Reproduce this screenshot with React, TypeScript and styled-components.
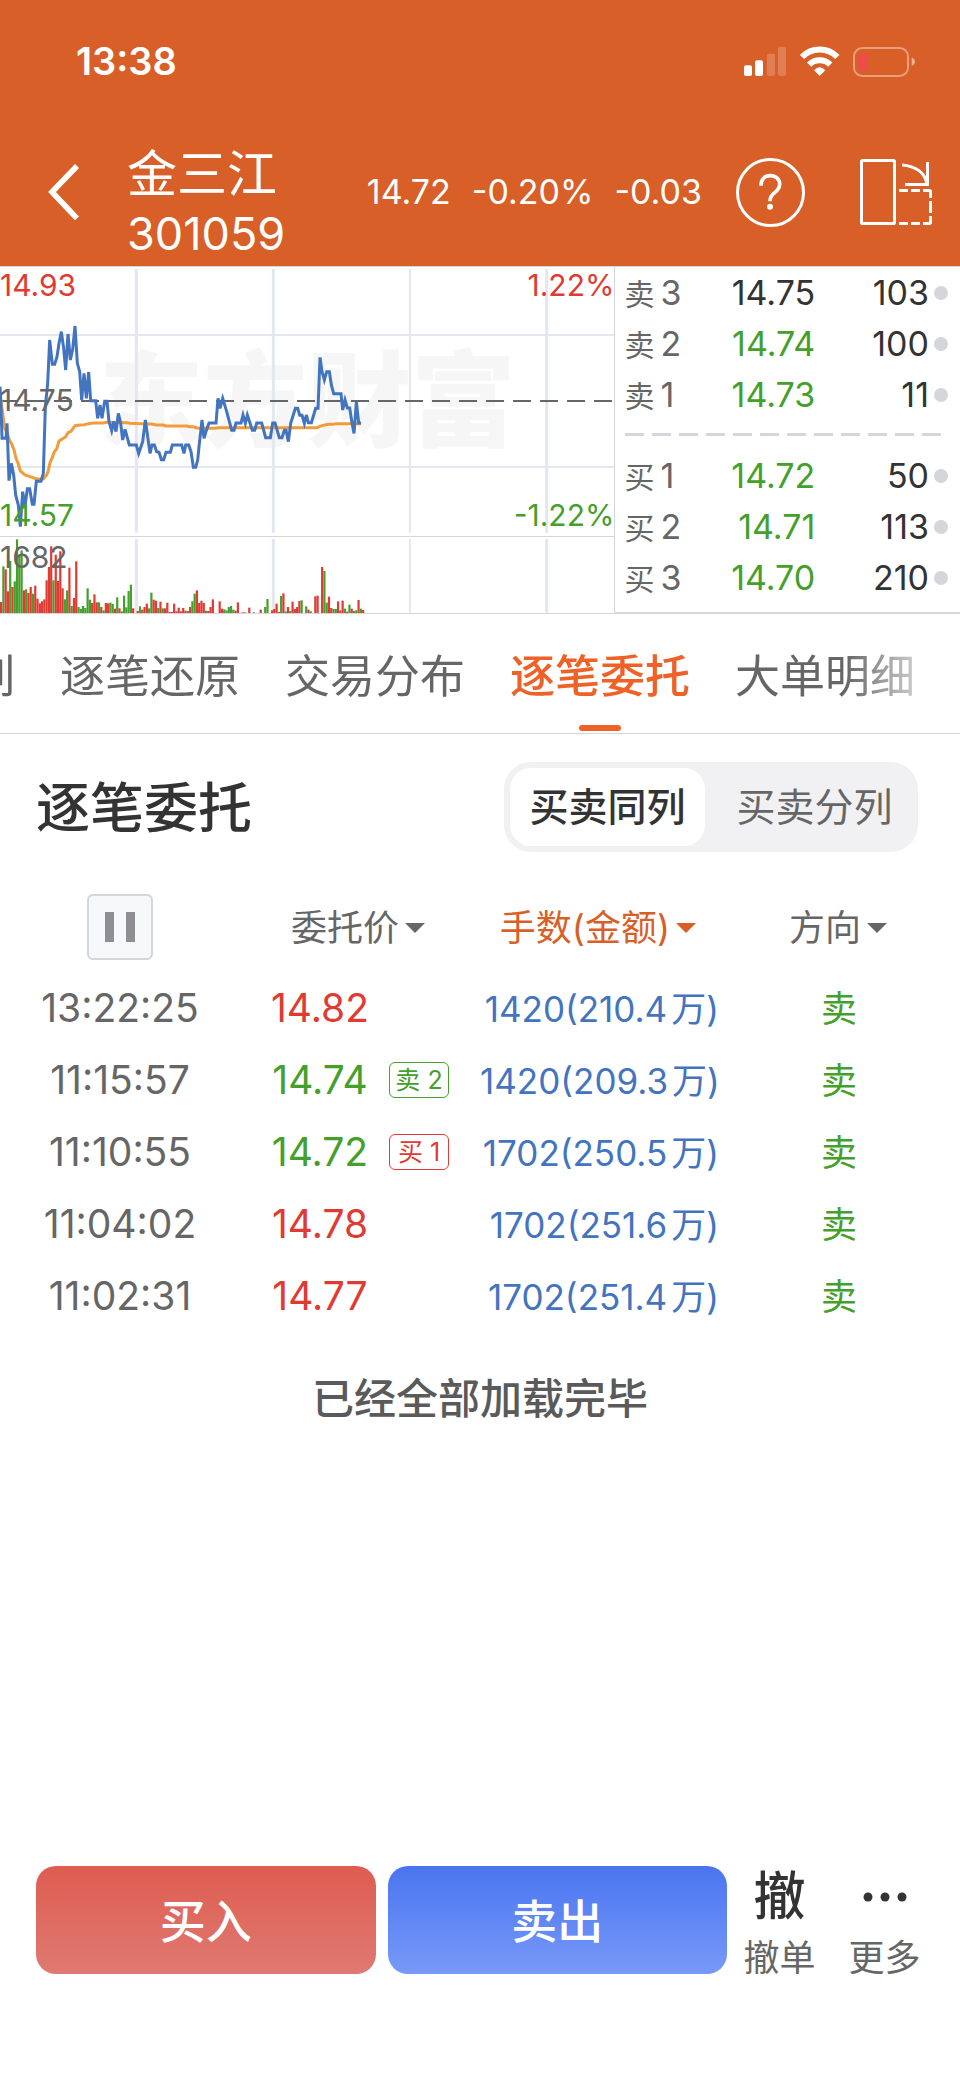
import React, { useState } from "react";
import styled, { createGlobalStyle } from "styled-components";

const colors = {
  brand: "#d85f28",
  accent: "#ee6228",
  up: "#df3b32",
  down: "#459f2b",
  blue: "#4274bf",
  ink: "#333333",
  grey: "#666666",
  line: "#d5d5dc",
  grid: "#e4e7ef",
};

type Tone = "up" | "down" | "ink" | "grey";

const GlobalStyle = createGlobalStyle`
  * { box-sizing: border-box; }
  body {
    margin: 0;
    background: #fff;
    color: ${colors.ink};
    font-family: Inter, "Noto Sans CJK SC", sans-serif;
  }
  button {
    margin: 0;
    padding: 0;
    border: 0;
    background: none;
    color: inherit;
    font: inherit;
    cursor: pointer;
  }
  svg { display: block; }
`;

const Page = styled.div`
  display: flex;
  flex-direction: column;
  min-height: 100vh;
`;

/* Header */

const Header = styled.header`
  background: ${colors.brand};
  color: #fff;
`;

const StatusBar = styled.div`
  display: flex;
  align-items: center;
  justify-content: space-between;
  height: 120px;
  padding: 2px 45px 0 76px;
`;

const Clock = styled.time`
  font-size: 38px;
  line-height: 48px;
  font-weight: 600;
`;

const NavBar = styled.nav`
  display: flex;
  align-items: center;
  height: 146px;
  padding: 0 28px 2px 48px;
`;

const Stock = styled.h1`
  flex: 1;
  margin: 0;
  padding: 24px 0 0 47px;
  font-size: 45px;
  line-height: 60px;
  font-weight: 400;
`;

const StockName = styled.span`
  display: block;
  font-size: 50px;
`;

const Quote = styled.div`
  display: flex;
  gap: 21px;
  font-size: 34px;
  line-height: 40px;
`;

const NavButton = styled.button<{ $gap?: number }>`
  margin-left: ${(p) => p.$gap ?? 0}px;
`;

/* Chart and order book */

const Market = styled.section`
  display: grid;
  grid-template-columns: minmax(0, 16fr) minmax(0, 9fr);
  border-top: 1px solid ${colors.line};
`;

const Chart = styled.div`
  position: relative;
`;

const Watermark = styled.span`
  position: absolute;
  top: 69px;
  left: 0;
  right: 0;
  color: #f6f6f6;
  font-size: 104px;
  line-height: 130px;
  font-weight: 900;
  text-align: center;
  white-space: nowrap;
`;

const ChartSvg = styled.svg`
  position: relative;
  width: 100%;
  height: 347px;
`;

const ChartLabel = styled.span<{ $tone: Tone; $top: number; $right?: boolean }>`
  position: absolute;
  top: ${(p) => p.$top}px;
  ${(p) => (p.$right ? "right: 0" : "left: 0")};
  color: ${(p) => colors[p.$tone]};
  font-size: 30px;
  line-height: 32px;
`;

const Book = styled.div`
  border-left: 1px solid ${colors.line};
  border-bottom: 2px solid ${colors.line};
`;

const BookTable = styled.table`
  width: 100%;
  table-layout: fixed;
  border-collapse: collapse;
  font-size: 34px;
  line-height: 51px;
`;

const BookLabel = styled.th`
  width: 26%;
  height: 51px;
  padding: 0 0 0 9px;
  color: ${colors.grey};
  font-weight: 400;
  text-align: left;
  white-space: nowrap;
`;

const BookSide = styled.span`
  margin-right: 6px;
  font-size: 30px;
  line-height: 40px;
`;

const BookPrice = styled.td<{ $tone: Tone }>`
  width: 32%;
  padding: 0;
  color: ${(p) => colors[p.$tone]};
  text-align: right;
`;

const BookSize = styled.td`
  padding: 0;
  text-align: right;
`;

const BookMark = styled.td`
  width: 31px;
  padding: 0 0 0 5px;
`;

const Dot = styled.span`
  display: block;
  width: 14px;
  height: 14px;
  border-radius: 50%;
  background: ${colors.line};
`;

const BookDivider = styled.div`
  height: 3px;
  margin: 13px 18px 14px 10px;
  background: repeating-linear-gradient(
    to right,
    ${colors.line} 0 19px,
    transparent 19px 27px
  );
`;

/* Tabs */

const Tabs = styled.div`
  overflow: hidden;
  border-bottom: 1px solid ${colors.line};
`;

const TabList = styled.div`
  display: flex;
  gap: 45px;
  margin-left: -30px;
  height: 119px;
  mask-image: linear-gradient(
    to right,
    #000 calc(100% - 115px),
    transparent calc(100% - 10px)
  );
`;

const Tab = styled.button<{ $active: boolean }>`
  position: relative;
  flex: none;
  padding-top: 7px;
  color: ${(p) => (p.$active ? colors.accent : colors.grey)};
  font-size: 45px;
  line-height: 60px;
  font-weight: ${(p) => (p.$active ? 500 : 400)};

  &::after {
    content: "";
    display: ${(p) => (p.$active ? "block" : "none")};
    position: absolute;
    bottom: 2px;
    left: 50%;
    width: 42px;
    height: 6px;
    margin-left: -21px;
    border-radius: 3px;
    background: ${colors.accent};
  }
`;

/* Orders */

const TitleRow = styled.div`
  display: flex;
  align-items: center;
  justify-content: space-between;
  padding: 28px 42px 30px 36px;
`;

const Title = styled.h2`
  margin: 0;
  padding-top: 4px;
  font-size: 54px;
  line-height: 72px;
  font-weight: 500;
`;

const Segmented = styled.div`
  display: flex;
  gap: 12px;
  padding: 6px;
  border-radius: 27px;
  background: #f1f1f4;
`;

const Segment = styled.button<{ $active: boolean }>`
  width: 195px;
  height: 78px;
  border-radius: 21px;
  background: ${(p) => (p.$active ? "#fff" : "transparent")};
  color: ${(p) => (p.$active ? colors.ink : colors.grey)};
  font-size: 39px;
  line-height: 78px;
  font-weight: ${(p) => (p.$active ? 500 : 400)};
`;

const Orders = styled.table`
  width: 100%;
  table-layout: fixed;
  border-collapse: collapse;
  font-size: 39px;
  line-height: 72px;
`;

const HeadCell = styled.th`
  height: 90px;
  padding: 0;
  font-weight: 400;
`;

const PauseButton = styled.button`
  display: flex;
  align-items: center;
  justify-content: center;
  gap: 12px;
  width: 66px;
  height: 66px;
  margin: 0 auto;
  border: 2px solid ${colors.line};
  border-radius: 6px;
  background: #f6f8fa;
`;

const PauseBar = styled.span`
  width: 9px;
  height: 30px;
  background: #8f8e93;
`;

const SortButton = styled.button<{ $active?: boolean }>`
  display: flex;
  align-items: center;
  justify-content: center;
  gap: 6px;
  width: 100%;
  padding: 2px 4px 0 0;
  color: ${(p) => (p.$active ? colors.brand : colors.grey)};
  font-size: 36px;
  line-height: 54px;
  white-space: nowrap;
`;

const Caret = styled.span`
  border: 10px solid transparent;
  border-top-color: currentColor;
  border-bottom: 0;
`;

const TimeCell = styled.td`
  padding: 0;
  color: ${colors.grey};
  text-align: center;
`;

const PriceCell = styled.td`
  padding: 0 0 0 30px;
`;

const PriceLine = styled.div`
  display: flex;
  align-items: center;
  gap: 19px;
`;

const Price = styled.span<{ $tone: Tone }>`
  width: 100px;
  color: ${(p) => colors[p.$tone]};
  text-align: center;
`;

const Tag = styled.span<{ $tone: Tone }>`
  width: 60px;
  height: 36px;
  border: 1px solid currentColor;
  border-radius: 6px;
  color: ${(p) => colors[p.$tone]};
  font-size: 25px;
  line-height: 35px;
  text-align: center;
  white-space: nowrap;
`;

const AmountCell = styled.td`
  padding: 2px 1px 0 0;
  color: ${colors.blue};
  font-size: 35px;
  line-height: 70px;
  text-align: right;
  white-space: nowrap;
`;

const Unit = styled.span`
  margin-left: 4px;
`;

const SideCell = styled.td`
  padding: 2px 2px 0 0;
  color: ${colors.down};
  font-size: 36px;
  line-height: 70px;
  text-align: center;
`;

const EndNote = styled.p`
  flex: 1;
  margin: 0;
  padding: 35px 0 60px;
  color: #5a5a5a;
  font-size: 42px;
  line-height: 64px;
  font-weight: 500;
  text-align: center;
`;

/* Trade bar */

const TradeBar = styled.footer`
  display: flex;
  align-items: flex-start;
  padding: 0 23px 91px 36px;
`;

const TradeButton = styled.button<{ $from: string; $to: string }>`
  flex: 1;
  height: 108px;
  padding-bottom: 4px;
  border-radius: 20px;
  background: linear-gradient(${(p) => p.$from}, ${(p) => p.$to});
  color: #fff;
  font-size: 46px;
  font-weight: 500;

  & + & {
    margin-left: 12px;
  }
`;

const ToolButton = styled.button`
  display: flex;
  flex-direction: column;
  align-items: center;
  width: 105px;
  color: ${colors.grey};
  font-size: 36px;
  line-height: 60px;
`;

const ToolGlyph = styled.span`
  display: flex;
  align-items: center;
  height: 62px;
  color: ${colors.ink};
  font-size: 52px;
  font-weight: 500;
`;

/* Drawing coordinates use three units per pixel */

const PRICE_LINE =
  "0,380 3,440 6,535 18,535 21,490 27,662 34,610 41,645 47,705 55,735 61,800 68,695 75,740 82,686 89,686 97,733 102,733 109,664 123,664 130,640 136,440 143,370 149,240 157,313 164,313 171,290 177,250 184,215 191,265 197,330 204,222 211,300 218,268 225,198 232,310 239,335 245,420 252,340 259,415 266,336 272,422 287,422 293,475 300,435 306,475 314,424 321,424 327,485 335,512 341,485 348,515 355,460 362,490 368,540 375,508 388,555 409,555 416,580 428,545 436,480 443,530 450,580 456,555 463,555 470,575 477,577 484,599 491,599 498,577 511,577 517,555 545,555 552,580 557,555 566,555 573,575 580,622 587,622 593,600 598,550 606,480 612,535 620,508 627,489 648,489 654,415 660,445 668,415 680,455 695,511 702,511 708,489 723,489 729,465 736,490 742,465 757,511 764,511 770,489 785,489 797,533 811,533 818,489 825,489 838,533 846,533 853,511 858,511 865,545 872,490 886,445 893,445 899,466 906,466 913,490 919,465 925,488 934,488 947,445 954,445 960,292 966,335 973,360 980,335 988,335 994,375 1001,401 1023,401 1028,450 1035,420 1042,444 1049,444 1056,490 1062,520 1069,425 1076,489 1083,489";

const AVERAGE_LINE =
  "0,400 8,460 14,505 22,520 28,540 35,552 42,570 48,595 55,612 61,633 75,645 90,650 110,657 130,657 140,645 145,632 150,608 157,592 163,575 170,567 177,543 190,535 197,530 204,518 213,514 225,497 240,495 253,494 265,491 280,489 310,489 320,487 335,487 380,488 390,490 440,492 455,492 470,495 490,495 497,498 560,498 568,500 580,500 590,504 605,505 645,505 655,503 950,503 968,496 985,493 1000,493 1008,491 1083,491";

// One entry per minute: r = up, g = down, then the bar height; 0 = no trades.
const VOLUME =
  "r33 g140 r131 r65 g156 r78 g95 g221 g173 g188 r68 g71 r60 r78 g58 r82 r43 r29 r35 r41 r98 r138 r200 g98 r175 r96 r185 r74 g41 g68 r136 g21 r45 r155 g18 g12 g21 g15 g74 g40 r30 r56 r32 g32 r18 g8 r30 r29 g31 g27 r13 g47 r14 g5 g52 g17 g66 g85 r14 0 r6 g20 r10 r18 r28 g14 g61 r40 r37 g15 r34 g14 r14 r31 r3 r3 r28 r5 r16 r5 r15 r7 g6 r18 g35 g58 r68 r30 r37 r30 g7 r6 r18 r41 0 0 r35 r13 g11 g8 g18 g21 g10 r7 r32 0 r2 r2 0 r16 0 g2 0 0 r10 0 g18 g42 0 r8 r12 r28 r3 g51 r59 g5 r18 g6 r34 r12 r18 r36 g38 0 g20 r10 g5 0 r50 r52 0 r138 g126 g31 r49 r15 g12 g12 r35 r8 r37 g13 r4 g25 r13 g6 g8 r39 g13 r9"
    .split(" ")
    .map((entry) => ({
      color: entry[0] === "g" ? colors.down : colors.up,
      height: Number(entry.replace(/^[rg]/, "")),
    }));

const MINUTE = 6.83;

function PriceChart() {
  return (
    <Chart>
      <Watermark aria-hidden="true">东方财富</Watermark>
      <ChartSvg viewBox="0 21 1843 1041" preserveAspectRatio="none" role="img" aria-label="分时走势">
        <g stroke={colors.grid}>
          {[
            [409, 9],
            [820, 9],
            [1230, 6],
            [1640, 9],
          ].map(([x, width]) => (
            <path key={x} d={`M${x} 27V818M${x} 837V1058`} strokeWidth={width} />
          ))}
          <path d="M0 225H1843M0 621H1843" strokeWidth="6" />
        </g>
        <path d="M0 829.500H1843M0 1060.500H1843" stroke={colors.line} strokeWidth="3" />
        {VOLUME.map((bar, i) => (
          <rect
            key={i}
            x={i * MINUTE}
            y={1059 - bar.height}
            width={MINUTE - 0.2}
            height={bar.height}
            fill={bar.color}
          />
        ))}
        <path d="M0 423H1836" stroke={colors.grey} strokeWidth="6" strokeDasharray="54 27" />
        <g fill="none" strokeWidth="9">
          <polyline points={AVERAGE_LINE} stroke="#f19c38" />
          <polyline points={PRICE_LINE} stroke={colors.blue} />
        </g>
      </ChartSvg>
      <ChartLabel $tone="up" $top={2}>14.93</ChartLabel>
      <ChartLabel $tone="grey" $top={117}>14.75</ChartLabel>
      <ChartLabel $tone="down" $top={232}>14.57</ChartLabel>
      <ChartLabel $tone="grey" $top={274}>1682</ChartLabel>
      <ChartLabel $tone="up" $top={2} $right>1.22%</ChartLabel>
      <ChartLabel $tone="down" $top={232} $right>-1.22%</ChartLabel>
    </Chart>
  );
}

type Level = { side: string; rank: number; price: string; size: number; tone: Tone };

const asks: Level[] = [
  { side: "卖", rank: 3, price: "14.75", size: 103, tone: "ink" },
  { side: "卖", rank: 2, price: "14.74", size: 100, tone: "down" },
  { side: "卖", rank: 1, price: "14.73", size: 11, tone: "down" },
];

const bids: Level[] = [
  { side: "买", rank: 1, price: "14.72", size: 50, tone: "down" },
  { side: "买", rank: 2, price: "14.71", size: 113, tone: "down" },
  { side: "买", rank: 3, price: "14.70", size: 210, tone: "down" },
];

function Levels({ levels }: { levels: Level[] }) {
  return (
    <BookTable>
      <tbody>
        {levels.map((level) => (
          <tr key={level.rank}>
            <BookLabel scope="row">
              <BookSide>{level.side}</BookSide>
              {level.rank}
            </BookLabel>
            <BookPrice $tone={level.tone}>{level.price}</BookPrice>
            <BookSize>{level.size}</BookSize>
            <BookMark>
              <Dot />
            </BookMark>
          </tr>
        ))}
      </tbody>
    </BookTable>
  );
}

type Order = {
  time: string;
  price: string;
  tone: Tone;
  tag?: { text: string; tone: Tone };
  amount: string;
};

const orders: Order[] = [
  { time: "13:22:25", price: "14.82", tone: "up", amount: "1420(210.4" },
  { time: "11:15:57", price: "14.74", tone: "down", tag: { text: "卖 2", tone: "down" }, amount: "1420(209.3" },
  { time: "11:10:55", price: "14.72", tone: "down", tag: { text: "买 1", tone: "up" }, amount: "1702(250.5" },
  { time: "11:04:02", price: "14.78", tone: "up", amount: "1702(251.6" },
  { time: "11:02:31", price: "14.77", tone: "up", amount: "1702(251.4" },
];

function StatusIcons() {
  return (
    <svg width="171" height="31" viewBox="792 135 513 93" aria-hidden="true">
      <g fill="#fff">
        <rect x="792" y="193" width="24" height="32" rx="6" />
        <rect x="825" y="178" width="24" height="47" rx="6" />
        <g opacity="0.2">
          <rect x="861" y="158" width="24" height="67" rx="6" />
          <rect x="894" y="138" width="24" height="87" rx="6" />
        </g>
        <path d="M1019 225L1002 208Q1019 189 1036 208Z" />
        <path d="M1295 169Q1305 174 1305 182T1295 195Z" opacity="0.5" />
      </g>
      <g fill="none" stroke="#fff">
        <path d="M966 168A74 74 0 0 1 1072 168" strokeWidth="18" />
        <path d="M987 191A46 46 0 0 1 1051 191" strokeWidth="18" />
        <rect x="1122" y="141" width="162" height="84" rx="25" strokeWidth="6" opacity="0.4" />
      </g>
      <rect x="1135" y="156" width="27" height="52" rx="11" fill="#ee4b4b" />
    </svg>
  );
}

function BackIcon() {
  return (
    <svg width="32" height="56" viewBox="143 490 96 168" aria-hidden="true">
      <path d="M230 496L155 574L230 653" fill="none" stroke="#fff" strokeWidth="17" />
    </svg>
  );
}

function HelpIcon() {
  return (
    <svg width="69" height="69" viewBox="768 471 207 207" aria-hidden="true">
      <circle cx="871.500" cy="574.500" r="99" fill="none" stroke="#fff" strokeWidth="9" />
      <path
        d="M843 554C843 535 854 524 871 524C888 524 899 535 899 549C899 561 893 568 884 575C874 582 870 588 870 601"
        fill="none"
        stroke="#fff"
        strokeWidth="11"
      />
      <circle cx="870" cy="617" r="9" fill="#fff" />
    </svg>
  );
}

function RotateIcon() {
  return (
    <svg width="72" height="66" viewBox="1140 474 216 198" aria-hidden="true">
      <g fill="none" stroke="#fff" strokeWidth="9">
        <rect x="1144.500" y="478.500" width="99" height="189" rx="4" />
        <path d="M1266 492C1306 495 1337 515 1340 550" />
        <path d="M1342.500 483V550.500H1275" />
        <path d="M1257 568.500H1284M1293 568.500H1320M1329 568.500H1348Q1351.500 568.500 1351.500 572V591M1351.500 600V636M1351.500 645V664Q1351.500 667.500 1348 667.500H1329M1320 667.500H1293M1284 667.500H1257" />
      </g>
    </svg>
  );
}

function MoreIcon() {
  return (
    <svg width="44" height="10" viewBox="0 0 44 10" fill="currentColor" aria-hidden="true">
      <circle cx="5" cy="5" r="4.500" />
      <circle cx="22" cy="5" r="4.500" />
      <circle cx="39" cy="5" r="4.500" />
    </svg>
  );
}

const tabs = ["列", "逐笔还原", "交易分布", "逐笔委托", "大单明细"];
const views = ["买卖同列", "买卖分列"];

export default function App() {
  const [tab, setTab] = useState("逐笔委托");
  const [view, setView] = useState("买卖同列");

  return (
    <Page>
      <GlobalStyle />
      <Header>
        <StatusBar>
          <Clock>13:38</Clock>
          <StatusIcons />
        </StatusBar>
        <NavBar>
          <NavButton aria-label="返回">
            <BackIcon />
          </NavButton>
          <Stock>
            <StockName>金三江</StockName>
            301059
          </Stock>
          <Quote>
            <span>14.72</span>
            <span>-0.20%</span>
            <span>-0.03</span>
          </Quote>
          <NavButton $gap={34} aria-label="帮助">
            <HelpIcon />
          </NavButton>
          <NavButton $gap={55} aria-label="横屏">
            <RotateIcon />
          </NavButton>
        </NavBar>
      </Header>

      <Market>
        <PriceChart />
        <Book>
          <Levels levels={asks} />
          <BookDivider />
          <Levels levels={bids} />
        </Book>
      </Market>

      <Tabs>
        <TabList role="tablist">
          {tabs.map((name) => (
            <Tab
              key={name}
              role="tab"
              aria-selected={tab === name}
              $active={tab === name}
              onClick={() => setTab(name)}
            >
              {name}
            </Tab>
          ))}
        </TabList>
      </Tabs>

      <TitleRow>
        <Title>逐笔委托</Title>
        <Segmented>
          {views.map((name) => (
            <Segment
              key={name}
              aria-pressed={view === name}
              $active={view === name}
              onClick={() => setView(name)}
            >
              {name}
            </Segment>
          ))}
        </Segmented>
      </TitleRow>

      <Orders>
        <thead>
          <tr>
            <HeadCell>
              <PauseButton aria-label="暂停">
                <PauseBar />
                <PauseBar />
              </PauseButton>
            </HeadCell>
            <HeadCell>
              <SortButton>
                委托价
                <Caret />
              </SortButton>
            </HeadCell>
            <HeadCell>
              <SortButton $active>
                手数(金额)
                <Caret />
              </SortButton>
            </HeadCell>
            <HeadCell>
              <SortButton>
                方向
                <Caret />
              </SortButton>
            </HeadCell>
          </tr>
        </thead>
        <tbody>
          {orders.map((order) => (
            <tr key={order.time}>
              <TimeCell>{order.time}</TimeCell>
              <PriceCell>
                <PriceLine>
                  <Price $tone={order.tone}>{order.price}</Price>
                  {order.tag && <Tag $tone={order.tag.tone}>{order.tag.text}</Tag>}
                </PriceLine>
              </PriceCell>
              <AmountCell>
                {order.amount}
                <Unit>万</Unit>)
              </AmountCell>
              <SideCell>卖</SideCell>
            </tr>
          ))}
        </tbody>
      </Orders>
      <EndNote>已经全部加载完毕</EndNote>

      <TradeBar>
        <TradeButton $from="#de5c50" $to="#df7a72">买入</TradeButton>
        <TradeButton $from="#4a75ef" $to="#7799f8">卖出</TradeButton>
        <ToolButton>
          <ToolGlyph>撤</ToolGlyph>
          撤单
        </ToolButton>
        <ToolButton>
          <ToolGlyph>
            <MoreIcon />
          </ToolGlyph>
          更多
        </ToolButton>
      </TradeBar>
    </Page>
  );
}
